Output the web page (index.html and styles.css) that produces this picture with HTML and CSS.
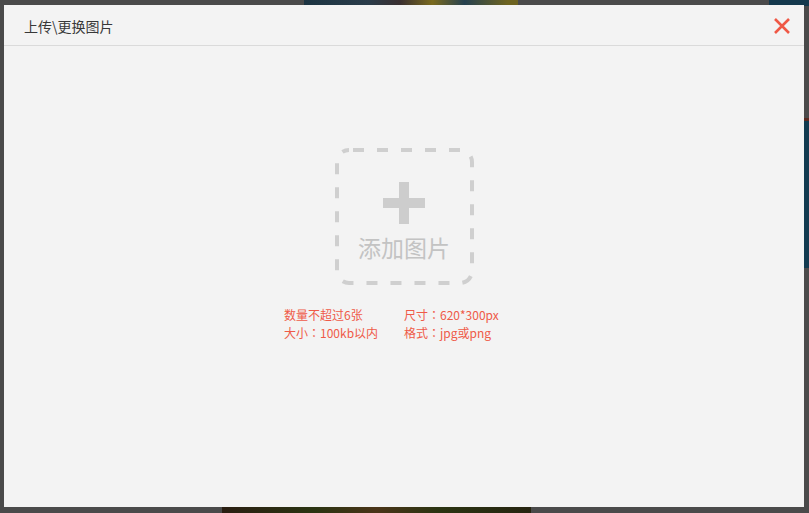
FILE: index.html
```html
<!DOCTYPE html>
<html lang="zh-CN">
<head>
<meta charset="utf-8">
<title>上传\更换图片</title>
<link rel="stylesheet" href="styles.css">
</head>
<body>
<div class="backdrop">
  <div class="bg bg-top"></div>
  <div class="bg bg-corner"></div>
  <div class="bg bg-right"></div>
  <div class="bg bg-bottom"></div>
</div>
<div class="modal">
  <div class="modal-header">
    <span class="modal-title">上传\更换图片</span>
    <svg class="close" width="16" height="16" viewBox="0 0 16 16"><path d="M1 1L15 15M15 1L1 15" stroke="#ef5846" stroke-width="2.6" stroke-linecap="butt"/></svg>
  </div>
  <div class="modal-body">
    <div class="upload-box">
      <svg class="dash" width="139" height="137" viewBox="0 0 139 137"><rect x="2" y="2" width="135" height="133" rx="12" ry="12" fill="none" stroke="#cfcfcf" stroke-width="4" stroke-dasharray="11 13" stroke-dashoffset="-4"/></svg>
      <div class="plus"><span class="bar-h"></span><span class="bar-v"></span></div>
      <div class="upload-label">添加图片</div>
    </div>
    <div class="rules">
      <span>数量不超过6张</span><span>尺寸<span class="colon" lang="zh-TW">：</span>620*300px</span>
      <span>大小<span class="colon" lang="zh-TW">：</span>100kb以内</span><span>格式<span class="colon" lang="zh-TW">：</span>jpg或png</span>
    </div>
  </div>
</div>
</body>
</html>
```

FILE: styles.css
```css
html, body {
  margin: 0;
  padding: 0;
  width: 809px;
  height: 513px;
  overflow: hidden;
  background: #4a4a4a;
  font-family: "Noto Sans CJK SC", "Noto Sans", sans-serif;
}
.backdrop {
  position: absolute;
  inset: 0;
}
.bg {
  position: absolute;
}
.bg-top {
  left: 304px;
  top: 0;
  width: 214px;
  height: 6px;
  background: linear-gradient(90deg, #1c3442 0%, #2a3c4a 30%, #3a2f30 45%, #7a6a1e 60%, #25404f 75%, #6d6320 95%);
}
.bg-corner {
  left: 769px;
  top: 0;
  width: 40px;
  height: 6px;
  background: #14394d;
}
.bg-right {
  left: 804px;
  top: 118px;
  width: 5px;
  height: 147px;
  background: #113a4f;
  border-top: 3px solid #5a2a20;
}
.bg-bottom {
  left: 222px;
  top: 507px;
  width: 309px;
  height: 6px;
  background: linear-gradient(90deg, #2a1e12 0%, #2b3412 30%, #4a3418 50%, #2b3412 70%, #262410 100%);
}
.modal {
  position: absolute;
  left: 4px;
  top: 5px;
  width: 800px;
  height: 502px;
  background: #f3f3f3;
  display: flex;
  flex-direction: column;
}
.modal-header {
  height: 40px;
  border-bottom: 1px solid #dadada;
  display: flex;
  align-items: center;
  justify-content: space-between;
  padding: 0 14px 0 20px;
}
.modal-title {
  font-size: 14px;
  color: #383838;
  line-height: 1;
  margin-top: 1px;
}
.close {
  display: block;
  margin-top: 1px;
}
.modal-body {
  flex: 1;
  display: flex;
  flex-direction: column;
  align-items: center;
  padding-top: 102px;
}
.upload-box {
  position: relative;
  box-sizing: border-box;
  width: 139px;
  height: 137px;
  display: flex;
  flex-direction: column;
  align-items: center;
  padding-top: 34px;
}
.dash {
  position: absolute;
  left: 0;
  top: 0;
}
.plus {
  position: relative;
  width: 42px;
  height: 42px;
}
.bar-h, .bar-v {
  position: absolute;
  background: #cdcdcd;
}
.bar-h {
  left: 0;
  top: 16px;
  width: 42px;
  height: 10px;
}
.bar-v {
  left: 16px;
  top: 0;
  width: 10px;
  height: 42px;
}
.upload-label {
  margin-top: 11px;
  font-size: 23px;
  line-height: 24px;
  color: #c3c3c3;
}
.rules {
  margin-top: 21px;
  width: 240px;
  display: grid;
  grid-template-columns: 120px 120px;
  font-size: 12px;
  line-height: 18px;
  color: #ef5a48;
  white-space: nowrap;
}
.colon {
  font-family: "Noto Sans CJK TC", sans-serif;
}
```
